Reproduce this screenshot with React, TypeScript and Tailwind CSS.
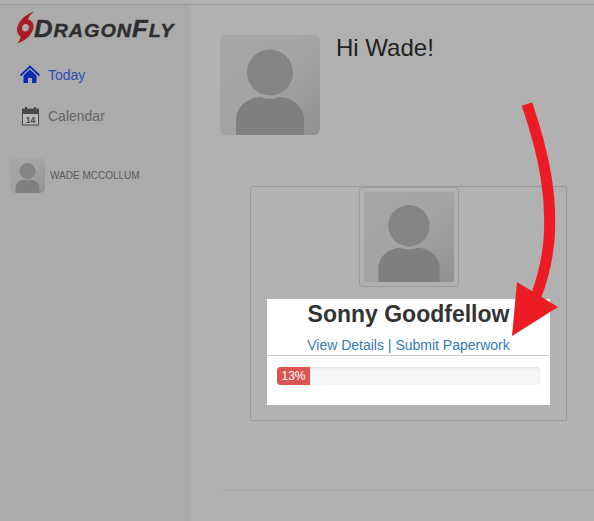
function Avatar({ className }: { className: string }) {
  return (
    <div className={`overflow-hidden bg-linear-to-br from-[#a6a6a6] via-[#a4a4a4] to-[#909192] ${className}`}>
      <svg viewBox="0 0 100 100" className="block h-full w-full">
        <circle cx="50" cy="37.5" r="23" fill="#838486" />
        <path d="M16 100V84C16 71 29 62 41 62C45 64.5 55 64.5 59 62C71 62 84 71 84 84V100Z" fill="#7e7f81" />
      </svg>
    </div>
  );
}

function Logo() {
  return (
    <div className="flex h-[40px] items-center pl-4">
      <svg width="19" height="33" viewBox="0 0 19 33" className="shrink-0">
        <path
          fillRule="evenodd"
          d="M18 0.5C11 3 2 9 1 18C1 21 2 24 4.5 25.5C4.5 28 3 30.5 1 32.5C8 30.5 16 25 17.5 16.5C18 12.5 16 9.5 12 8.5C13 5.5 15 3 18 0.5ZM9.5 13C11.5 13 13 14.5 13 16.5C13 19 11 20.5 9 20.5C7 20.5 6 19 6 17C6 15 7.5 13 9.5 13Z"
          fill="#a81e22"
        />
      </svg>
      <span className="-ml-px mt-[3px] inline-block origin-left scale-x-107 font-bold italic text-[#2e2e30] text-[18.5px] leading-none tracking-[0.9px] whitespace-nowrap [-webkit-text-stroke:0.4px_#2e2e30]">
        <span className="text-[24px]">D</span>RAGON<span className="text-[24px]">F</span>LY
      </span>
    </div>
  );
}

function HomeIcon() {
  return (
    <svg width="20" height="20" viewBox="0 0 20 20">
      <path d="M0.5 10.5L10 1.5L19.5 10.5" fill="none" stroke="#0a2cb0" strokeWidth="1.8" />
      <path d="M3.5 10.5L10 4.5L16.5 10.5V18H12V13H8V18H3.5Z" fill="#0a2cb0" />
    </svg>
  );
}

function CalendarIcon() {
  return (
    <svg width="20" height="20" viewBox="0 0 20 20">
      <rect x="2.5" y="3" width="16" height="16" fill="#b8b8b8" stroke="#4a4a4a" />
      <rect x="2" y="3" width="17" height="5" fill="#4a4a4a" />
      <rect x="5" y="1" width="2" height="3" fill="#4a4a4a" />
      <rect x="14" y="1" width="2" height="3" fill="#4a4a4a" />
      <text x="10.5" y="17" textAnchor="middle" fontSize="8.5" fontWeight="700" fontFamily="Liberation Sans" fill="#4a4a4a">
        14
      </text>
    </svg>
  );
}

export default function App() {
  return (
    <div className="relative h-[521px] w-[594px] overflow-hidden bg-[#b1b1b1] font-['Liberation_Sans',sans-serif]">
      <div className="h-[5px] border-b border-[#9b9b9b]" />
      <div className="flex h-[516px]">
        {/* Sidebar */}
        <div className="w-[190px] shrink-0 bg-[#ababab]">
          <div className="pt-[2px]">
            <Logo />
          </div>
          <div className="mt-[18px] flex flex-col gap-[21px] pl-5">
            <div className="flex h-5 items-center gap-[8px] text-[14px] text-[#2d4cb0]">
              <HomeIcon />
              Today
            </div>
            <div className="flex h-5 items-center gap-[8px] text-[14px] text-[#666666]">
              <CalendarIcon />
              Calendar
            </div>
          </div>
          <div className="mt-[32px] flex items-center gap-[5px] pl-[10px]">
            <Avatar className="h-[35px] w-[35px] rounded-[5px]" />
            <span className="text-[10px] text-[#5a5a5a]">WADE MCCOLLUM</span>
          </div>
        </div>

        {/* Main */}
        <div className="flex-1 pl-[30px]">
          <div className="h-[486px] rounded-bl-[3px] border-b border-[#a5a5a5]">
            <div className="flex pt-[30px]">
              <Avatar className="h-[100px] w-[100px] rounded-[6px]" />
              <h1 className="ml-4 text-[24px] leading-[26px] text-[#222222]">Hi Wade!</h1>
            </div>

            <div className="ml-[30px] mt-[51px] h-[235px] w-[317px] rounded-[2px] border border-[#999999]">
              <div className="mx-auto w-[100px] rounded-[4px] border border-[#9b9b9b] p-[4px]">
                <Avatar className="h-[90px] w-[90px]" />
              </div>
              <div className="ml-[16px] mt-[12px] h-[106px] w-[283px] bg-white">
                <div className="text-center text-[23px] font-bold leading-[31px] text-[#333333]">Sonny Goodfellow</div>
                <div className="mt-[5px] text-center text-[14px] leading-[20px] text-[#337ab7]">View Details | Submit Paperwork</div>
                <div className="-mx-px border-t border-[#cccccc]" />
                <div className="mx-[10px] mt-[11px] h-[18px] overflow-hidden rounded-[4px] bg-[#f5f5f5] shadow-[inset_0_1px_2px_rgba(0,0,0,0.1)]">
                  <div className="h-full w-[33px] bg-[#d9534f] text-center text-[12px] leading-[18px] text-white">13%</div>
                </div>
              </div>
            </div>
          </div>
        </div>
      </div>

      {/* Red annotation arrow */}
      <svg className="absolute left-0 top-0 pointer-events-none" width="594" height="521" viewBox="0 0 594 521">
        <path d="M527 104C546 160 552 200 549 240C547 262 543 278 536 296" fill="none" stroke="#ed1c24" strokeWidth="11" />
        <path d="M517 282L558 307L512 336Z" fill="#ed1c24" />
      </svg>
    </div>
  );
}
